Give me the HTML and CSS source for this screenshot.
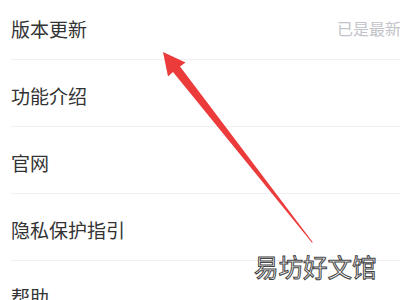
FILE: index.html
```html
<!DOCTYPE html>
<html lang="zh-CN">
<head>
    <meta charset="UTF-8">
    <meta name="viewport" content="width=device-width, initial-scale=1.0">
    <title>设置</title>
    <link rel="stylesheet" href="styles.css">
</head>
<body>
    <div class="settings">
        <div class="row">
            <span class="label">版本更新</span>
            <span class="value">已是最新</span>
        </div>
        <div class="row">
            <span class="label">功能介绍</span>
        </div>
        <div class="row">
            <span class="label">官网</span>
        </div>
        <div class="row">
            <span class="label">隐私保护指引</span>
        </div>
        <div class="row">
            <span class="label">帮助</span>
        </div>
    </div>

    <!-- annotation arrow pointing at the update row -->
    <svg class="arrow" width="400" height="300" viewBox="0 0 400 300">
        <polygon fill="#ec3b3b" points="163,52 185.5,62.5 180,66.5 312.8,242.3 312,242.8 173,72.1 168,76.5"/>
    </svg>

    <div class="watermark">易坊好文馆</div>
</body>
</html>
```

FILE: styles.css
```css
html, body {
    margin: 0;
    padding: 0;
    width: 400px;
    height: 300px;
    overflow: hidden;
    background-color: #fff;
}
body {
    position: relative;
    font-family: "Noto Sans CJK SC", "Noto Sans", sans-serif;
}
.settings {
    margin-top: -7px;
    padding-left: 11px;
}
.row {
    height: 66px;
    display: flex;
    align-items: center;
    justify-content: space-between;
    border-bottom: 1px solid #f0f0f2;
}
.label {
    font-size: 19px;
    color: #333;
    padding-top: 4px;
}
.value {
    font-size: 16px;
    color: #c3c3ca;
    margin-right: -1px;
    padding-top: 4px;
    white-space: nowrap;
}
.arrow {
    position: absolute;
    left: 0;
    top: 0;
}
.watermark {
    position: absolute;
    left: 254px;
    top: 253px;
    font-size: 24.5px;
    line-height: 28px;
    color: #fff;
    -webkit-text-stroke: 1px #444;
}
```
